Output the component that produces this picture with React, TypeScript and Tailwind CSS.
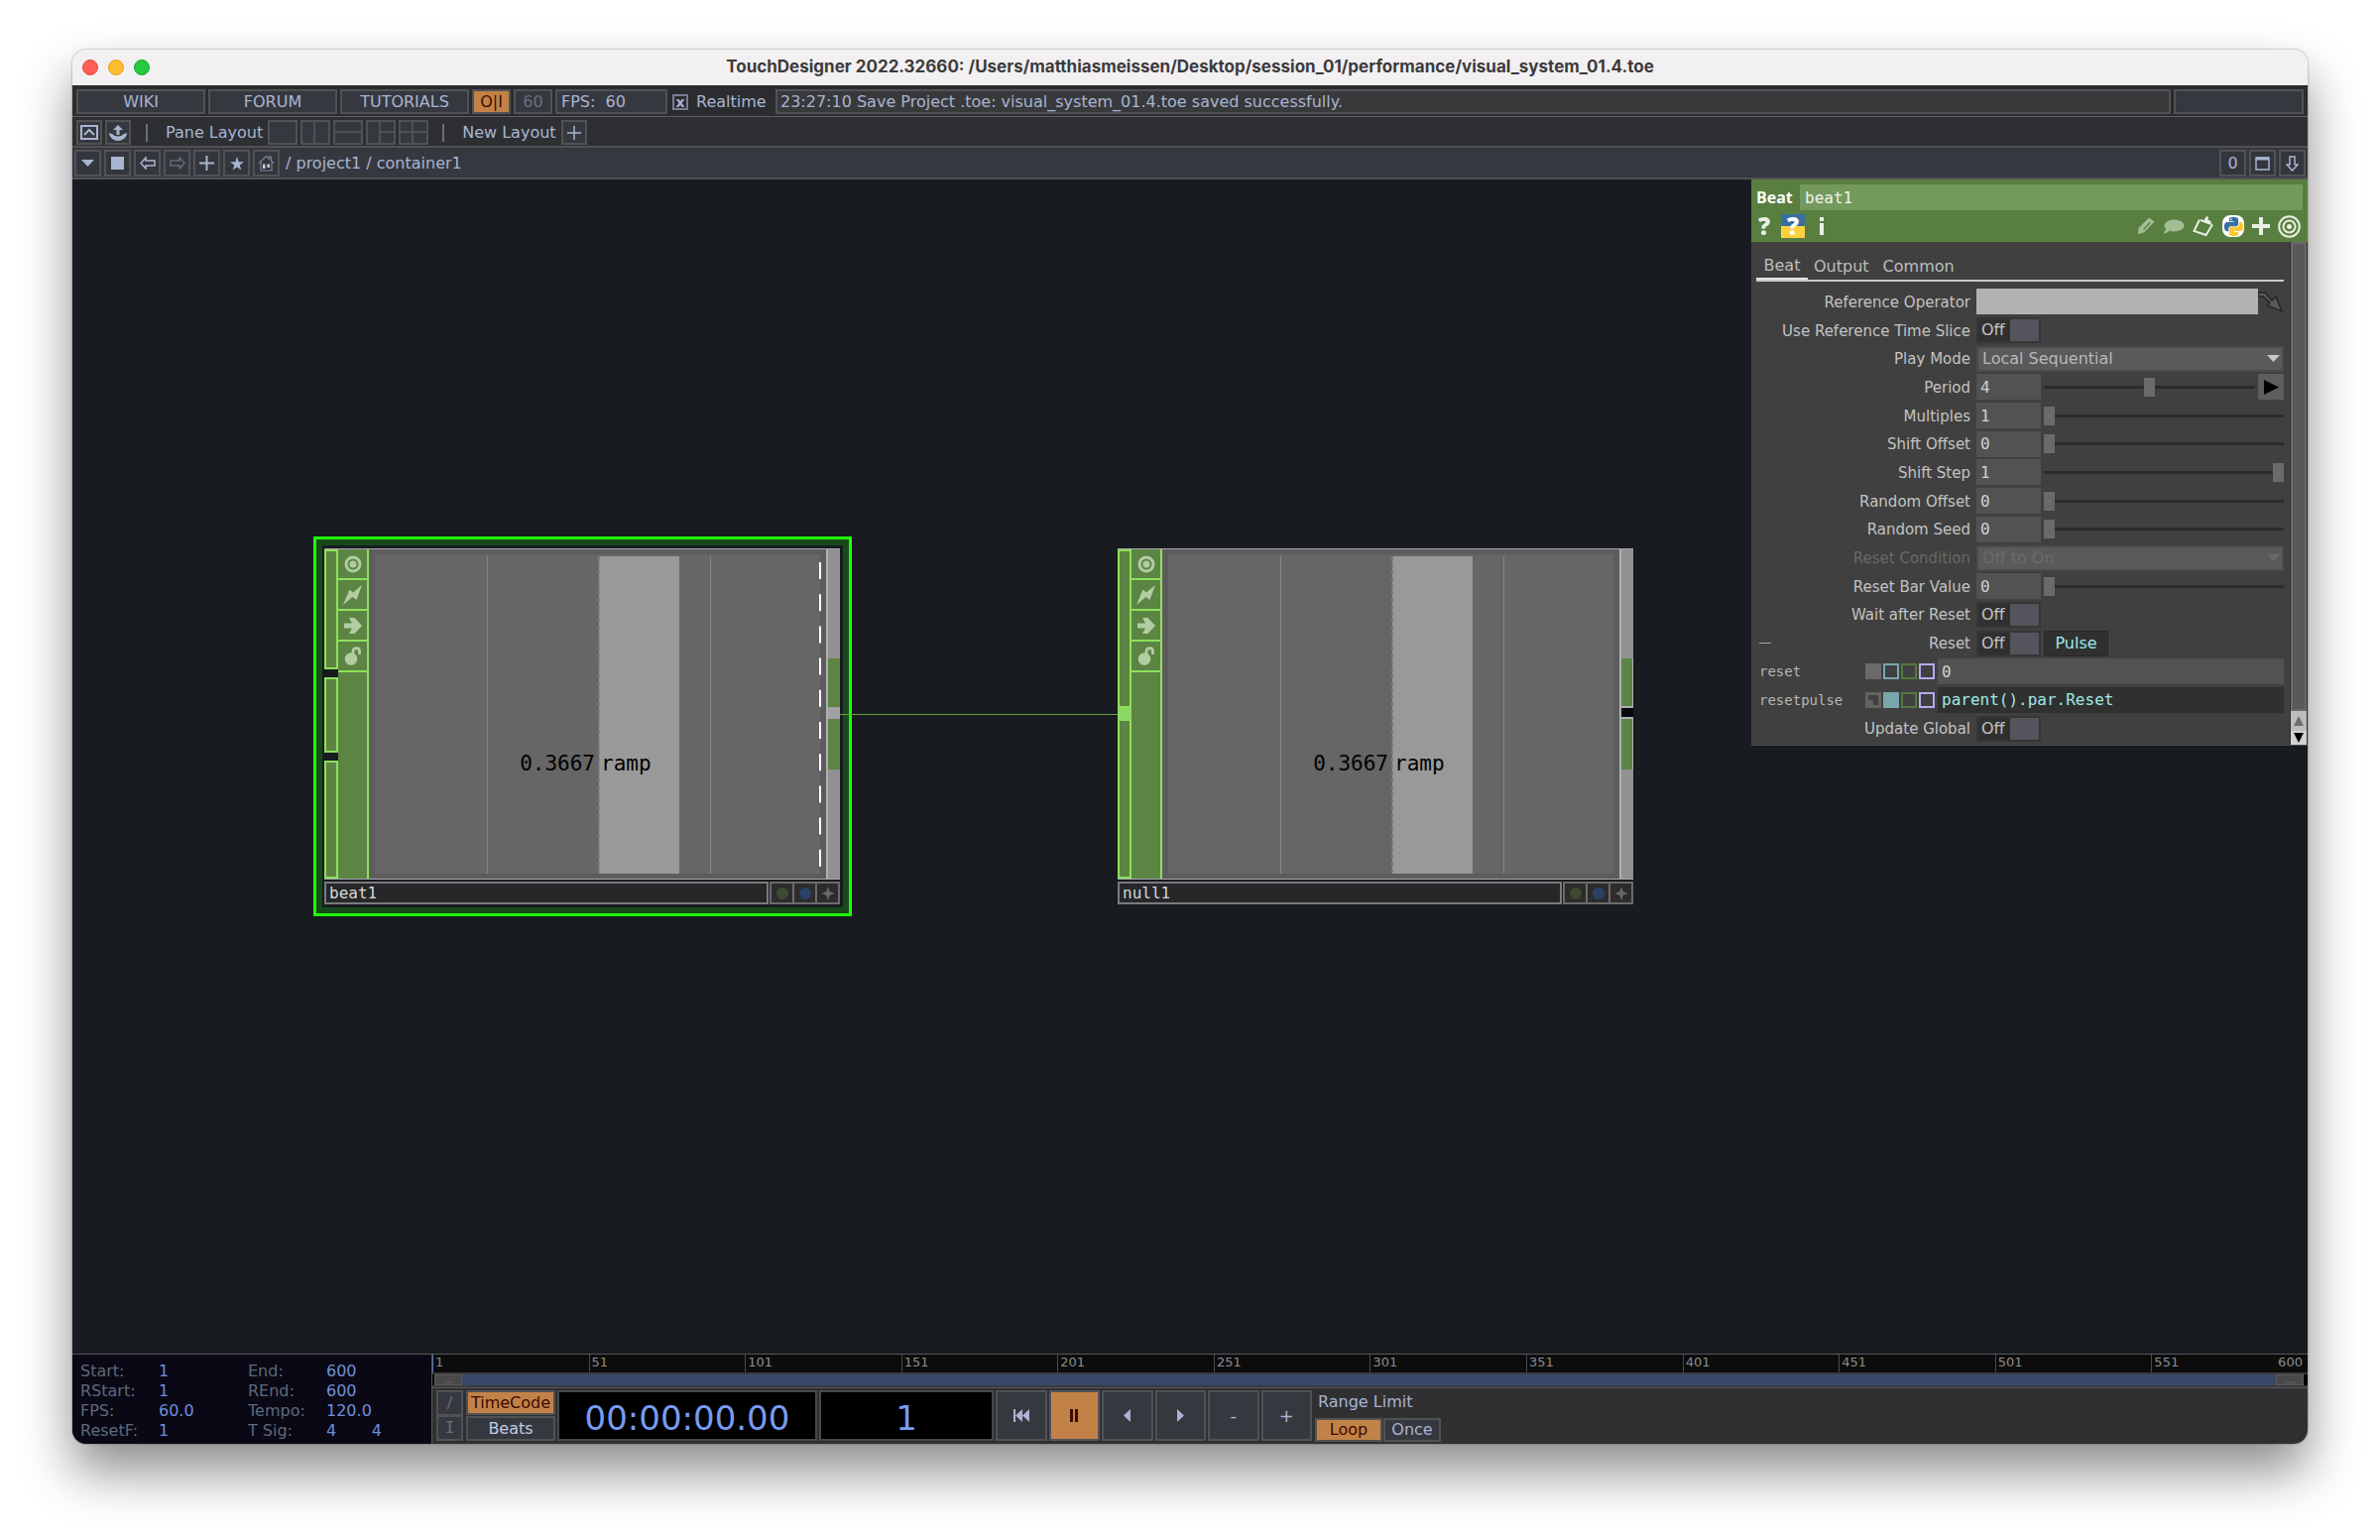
import React from "react";

const SANS = "font-['DejaVu_Sans','Liberation_Sans',sans-serif]";
const MONO = "font-['DejaVu_Sans_Mono','Liberation_Mono',monospace]";

function TitleBar() {
  return (
    <header className="relative flex h-9 items-center justify-center bg-[#f3f0f2] pb-px">
      <div className="absolute left-[10px] flex gap-[10px]">
        <span className="h-4 w-4 rounded-full border border-[#e2463f] bg-[#ff5f57]" />
        <span className="h-4 w-4 rounded-full border border-[#e1a116] bg-[#febc2e]" />
        <span className="h-4 w-4 rounded-full border border-[#12ac28] bg-[#28c840]" />
      </div>
      <h1 className="font-['Inter',sans-serif] text-[17px] leading-none font-bold text-[#3c3b3c]">
        TouchDesigner 2022.32660: /Users/matthiasmeissen/Desktop/session_01/performance/visual_system_01.4.toe
      </h1>
    </header>
  );
}

function MenuBar() {
  const link =
    "flex h-[25px] w-[130px] items-center justify-center border-2 border-[#515254] bg-[#363840]";
  return (
    <nav className="flex h-8 items-start gap-[3px] border-b border-[#5d5e60] bg-[#2b2c2f] px-1 pt-1 text-[16px] leading-5 text-[#a9b4d0]">
      <a href="#wiki" className={link}>
        WIKI
      </a>
      <a href="#forum" className={link}>
        FORUM
      </a>
      <a href="#tutorials" className={link}>
        TUTORIALS
      </a>
      <button className="h-[25px] w-[39px] border-2 border-[#515254] bg-[#c28247] leading-none text-[#3c0a02]">
        O|I
      </button>
      <button className="h-[25px] w-[39px] border-2 border-[#515254] bg-[#363840] leading-none text-[#6a6e7b]">
        60
      </button>
      <div className="flex h-[25px] w-[113px] items-center border-2 border-[#515254] bg-[#363840] pl-1 whitespace-pre">
        FPS:  60
      </div>
      <label className="flex h-[26px] w-[103px] items-center gap-2 pl-[2px]">
        <input type="checkbox" defaultChecked className="peer sr-only" />
        <span className="flex h-4 w-4 items-center justify-center border-2 border-[#787e90] text-[14px] leading-none font-bold">
          x
        </span>
        Realtime
      </label>
      <div className="flex h-[25px] flex-1 items-center border-2 border-[#515254] bg-[#38393b] pl-[3px]">
        23:27:10 Save Project .toe: visual_system_01.4.toe saved successfully.
      </div>
      <div className="h-[25px] w-[131px] border-2 border-[#515254] bg-[#363840]" />
    </nav>
  );
}

function LayoutBar() {
  const tool =
    "flex h-[25px] w-[26px] items-center justify-center border-2 border-[#515254] bg-[#363840]";
  const layout = "flex h-[25px] w-[30px] border-2 border-[#515254] bg-[#363840]";
  return (
    <div className="flex h-[31px] items-center border-b-2 border-[#515254] bg-[#2e2f32] px-1 pt-[2px] text-[16px] leading-5 text-[#a9b4d0]">
      <div className="flex gap-[3px]">
        <button className={tool} aria-label="Open palette">
          <svg width="18" height="15" viewBox="0 0 18 15" fill="none" stroke="currentColor" strokeWidth="2">
            <rect x="1" y="1" width="16" height="13" />
            <path d="M4 10l5-5 5 5" />
          </svg>
        </button>
        <button className={tool} aria-label="Export">
          <svg width="18" height="16" viewBox="0 0 18 16" fill="currentColor">
            <path d="M9 0l5 5h-3.500v5h-3V5H4z" />
            <path d="M0 8l4 1.500c1 2.500 9 2.500 10 0L18 8c0 4-4 8-9 8s-9-4-9-8z" />
          </svg>
        </button>
      </div>
      <span className="mr-[18px] ml-[15px] h-[18px] w-[2px] bg-[#6a6e7b]" />
      <span className="mr-[5px]">Pane Layout</span>
      <div className="flex gap-[3px]">
        <button className={layout} aria-label="Single pane" />
        <button className={layout} aria-label="Left and right">
          <span className="h-full w-1/2 border-r-2 border-[#515254]" />
        </button>
        <button className={`${layout} flex-col`} aria-label="Top and bottom">
          <span className="h-1/2 w-full border-b-2 border-[#515254]" />
        </button>
        <button className={layout} aria-label="Left and split right">
          <span className="h-full w-1/2 border-r-2 border-[#515254]" />
          <span className="h-1/2 w-1/2 border-b-2 border-[#515254]" />
        </button>
        <button className={layout} aria-label="Quad">
          <span className="flex h-full w-1/2 border-r-2 border-[#515254]">
            <span className="h-1/2 w-full border-b-2 border-[#515254]" />
          </span>
          <span className="h-1/2 w-1/2 border-b-2 border-[#515254]" />
        </button>
      </div>
      <span className="mr-[18px] ml-[14px] h-[18px] w-[2px] bg-[#6a6e7b]" />
      <span className="mr-[5px]">New Layout</span>
      <button className={tool} aria-label="Add layout">
        <svg width="14" height="14" viewBox="0 0 14 14" stroke="currentColor" strokeWidth="1.500">
          <path d="M7 0v14M0 7h14" />
        </svg>
      </button>
    </div>
  );
}

function PathBar() {
  const tool =
    "flex h-[27px] w-[27px] items-center justify-center border-2 border-[#515254] bg-[#34363d]";
  return (
    <div className="flex h-8 items-center gap-[3px] border-b-2 border-[#515254] bg-[#363840] px-[2px] pt-px text-[16px] leading-5 text-[#a9b4d0]">
      <button className={tool} aria-label="Pane type">
        <svg width="13" height="7" viewBox="0 0 13 7" fill="currentColor">
          <path d="M0 0h13L6.500 7z" />
        </svg>
      </button>
      <button className={tool} aria-label="Pane">
        <span className="h-[13px] w-[13px] bg-[#a9b4d0]" />
      </button>
      <button className={tool} aria-label="Back">
        <svg width="16" height="13" viewBox="0 0 16 13" fill="none" stroke="currentColor" strokeWidth="1.500">
          <path d="M1 6.500L6 1v3h9v5H6v3z" />
        </svg>
      </button>
      <button className={`${tool} text-[#666a77]`} aria-label="Forward">
        <svg width="16" height="13" viewBox="0 0 16 13" fill="none" stroke="currentColor" strokeWidth="1.500">
          <path d="M15 6.500L10 1v3H1v5h9v3z" />
        </svg>
      </button>
      <button className={tool} aria-label="Add bookmark">
        <svg width="15" height="15" viewBox="0 0 15 15" stroke="currentColor" strokeWidth="2">
          <path d="M7.500 0v15M0 7.500h15" />
        </svg>
      </button>
      <button className={tool} aria-label="Bookmarks">
        <svg width="14" height="14" viewBox="0 0 14 14" fill="currentColor">
          <path d="M7 0l1.700 5.200H14L9.700 8.400l1.600 5.200L7 10.400l-4.300 3.200 1.600-5.200L0 5.200h5.300z" />
        </svg>
      </button>
      <button className={tool} aria-label="Home">
        <svg width="17" height="17" viewBox="0 0 17 17" fill="none" stroke="#7d8396" strokeWidth="1.200">
          <path d="M1 8.500L8.500 1.500l3 2.800V2h2v4.200L16 8.500M3 7.500V16h11V7.500" />
          <path d="M5 9.500h2.500V14H5zM9.500 9.500H12V13H9.500z" fill="#c4cbe0" stroke="none" />
        </svg>
      </button>
      <span className="ml-[3px] flex-1">/ project1 / container1</span>
      <button className={`${tool} leading-none`}>0</button>
      <button className={tool} aria-label="Maximize">
        <svg width="15" height="14" viewBox="0 0 15 14" fill="none" stroke="currentColor" strokeWidth="1.500">
          <rect x="1" y="1" width="13" height="12" />
          <path d="M1 2h13" strokeWidth="3" />
        </svg>
      </button>
      <button className={tool} aria-label="Split down">
        <svg width="13" height="16" viewBox="0 0 13 16" fill="none" stroke="currentColor" strokeWidth="1.500">
          <path d="M4 1h5v8h3l-5.500 6L1 9h3z" />
        </svg>
      </button>
    </div>
  );
}

/* ---------- network editor ---------- */

function Waveform({ selected }: { selected: boolean }) {
  return (
    <svg className="block" width="461" height="332" viewBox="0 0 461 332">
      <rect width="461" height="332" fill="#5c5c5d" />
      <rect x="6" y="5" width="449" height="322" fill="#666666" />
      <path d="M119.500 7v320M344.500 7v320" stroke="#868686" />
      <rect x="232" y="7" width="81" height="320" fill="#999999" />
      <path d="M232 7v320" stroke="#7c7c7c" strokeWidth="2" strokeDasharray="4 3" />
      {selected && <path d="M455 13v307" stroke="#ffffff" strokeWidth="2" strokeDasharray="17 15.200" />}
      <text x="228" y="223" textAnchor="end" fontSize="21" className={MONO}>
        0.3667
      </text>
      <text x="234" y="223" fontSize="21" className={MONO}>
        ramp
      </text>
    </svg>
  );
}

function NodeFlags() {
  const flag =
    "flex h-[31px] w-full items-center justify-center border-b-2 border-[#8ee05c] text-[#b3cda3]";
  return (
    <div className="flex w-[31px] flex-col border-r-2 border-[#8ee05c] bg-[#5c8443]">
      <button className={flag} aria-label="Viewer active">
        <svg width="18" height="18" viewBox="0 0 18 18" fill="none" stroke="currentColor" strokeWidth="3">
          <circle cx="9" cy="9" r="7" />
          <circle cx="9" cy="9" r="3.500" fill="currentColor" stroke="none" />
        </svg>
      </button>
      <button className={flag} aria-label="Bypass">
        <svg width="20" height="20" viewBox="0 0 20 20" fill="currentColor">
          <path d="M19 0L13.500 15l-4-3L0 20 6.500 4.500l3.500 3z" />
        </svg>
      </button>
      <button className={flag} aria-label="Export">
        <svg width="18" height="16" viewBox="0 0 18 16" fill="currentColor">
          <path d="M0 5.500h8L5 0h5.500L18 8l-7.500 8H5l3-5.500H0z" />
        </svg>
      </button>
      <button className={flag} aria-label="Lock">
        <svg width="18" height="19" viewBox="0 0 18 19">
          <circle cx="7" cy="12.500" r="6.300" fill="currentColor" />
          <path d="M9 8V4.500C9 .8 15.500.8 15.500 4.500V8" fill="none" stroke="currentColor" strokeWidth="2.800" />
        </svg>
      </button>
    </div>
  );
}

interface NodeProps {
  name: string;
  inputs: React.ReactNode;
  output: React.ReactNode;
  selected?: boolean;
}

function OpNode({ name, inputs, output, selected = false }: NodeProps) {
  const small = "flex h-full items-center justify-center border-2 border-[#6b6b6b] bg-[#2b2c2b]";
  return (
    <div className="w-[520px]">
      <div className="flex h-[334px] border-y border-[#a7a7ac]">
        <div className="flex w-[14px] flex-col bg-[#181b20]">{inputs}</div>
        <NodeFlags />
        <div className="flex-1">
          <Waveform selected={selected} />
        </div>
        <div className="flex w-[14px] flex-col border-l-2 border-[#b0b0b4] bg-[#919191]">{output}</div>
      </div>
      <div className="mt-[2px] flex h-[23px]">
        <div
          className={`flex flex-1 items-center border-2 border-[#7b7b7b] bg-[#252729] pl-[3px] text-[16px] text-[#d8d8d8] ${MONO}`}
        >
          {name}
        </div>
        <span className="w-px" />
        <button className={`${small} w-[25px]`} aria-label="Display">
          <span className="h-3 w-3 rounded-full bg-[#3d4a31]" />
        </button>
        <button className={`${small} w-[23px] border-l-0`} aria-label="Render">
          <span className="h-3 w-3 rounded-full bg-[#2b4067]" />
        </button>
        <button className={`${small} w-[23px] border-l-0`} aria-label="Activate viewer">
          <svg width="14" height="14" viewBox="0 0 14 14" fill="#686868">
            <path d="M7 0l1.800 5.200L14 7 8.800 8.800 7 14 5.200 8.800 0 7l5.200-1.800z" />
          </svg>
        </button>
      </div>
    </div>
  );
}

function Network() {
  const port = "border-2 border-[#8ee05c] bg-[#5c8443]";
  return (
    <>
      {/* selection frame behind beat1 */}
      <div className="absolute top-[360px] left-[243px] h-[383px] w-[543px] border-[3px] border-[#1eff0a] bg-[#17491c] p-[6px]">
        <div className="h-full w-full bg-[#181b20]" />
      </div>
      <div className="absolute top-[372px] left-[254px]">
        <OpNode
          name="beat1"
          selected
          inputs={
            <>
              <span className={`h-[121px] ${port}`} />
              <span className="h-[8px]" />
              <span className={`h-[76px] ${port}`} />
              <span className="h-[8px]" />
              <span className={`flex-1 ${port}`} />
            </>
          }
          output={
            <>
              <span className="mt-[110px] h-[49px] bg-[#5c8443]" />
              <span className="h-[12px] bg-[#a1a1a6]" />
              <span className="h-[51px] bg-[#5c8443]" />
            </>
          }
        />
      </div>
      <div className="absolute top-[372px] left-[1054px]">
        <OpNode
          name="null1"
          inputs={
            <>
              <span className={`h-[160px] ${port}`} />
              <span className="h-[11px] bg-[#8bd964]" />
              <span className={`flex-1 ${port}`} />
            </>
          }
          output={
            <>
              <span className="mt-[110px] h-[50px] border-r border-b-2 border-[#b0b0b4] bg-[#5c8443]" />
              <span className="h-[9px] bg-[#08090b]" />
              <span className="h-[53px] border-t-2 border-r border-[#b0b0b4] bg-[#5c8443]" />
            </>
          }
        />
      </div>
      <div className="absolute top-[539px] left-[774px] h-px w-[280px] bg-[#67a03c]" />
    </>
  );
}

/* ---------- parameters ---------- */

function Row({ id, label, children, dim = false }: { id: string; label: string; children: React.ReactNode; dim?: boolean }) {
  return (
    <div className="flex flex-1 items-center gap-[6px]">
      <label
        htmlFor={id}
        className={`w-[216px] pt-px text-right text-[15px] ${dim ? "text-[#696969]" : "text-[#c3c3c3]"}`}
      >
        {label}
      </label>
      <div className="flex h-[26px] flex-1 items-center gap-[3px]">{children}</div>
    </div>
  );
}

function Toggle({ id }: { id: string }) {
  return (
    <div className="flex h-[26px] w-[65px] border-2 border-[#363636] bg-[#303030]">
      <span className="flex w-[32px] items-center pl-[3px] text-[#c3c3c3]">Off</span>
      <input id={id} type="checkbox" className="flex-1 appearance-none bg-[#53545c]" />
    </div>
  );
}

function NumberRow({ id, label, value, pos, children }: { id: string; label: string; value: string; pos: number; children?: React.ReactNode }) {
  return (
    <Row id={id} label={label}>
      <input
        id={id}
        defaultValue={value}
        className={`h-[26px] w-[65px] bg-[#525252] pl-1 text-[16px] text-[#d0d0d0] ${MONO}`}
      />
      <input
        type="range"
        aria-label={`${label} slider`}
        defaultValue={pos}
        className="h-5 min-w-0 flex-1 appearance-none bg-transparent [&::-webkit-slider-runnable-track]:h-[3px] [&::-webkit-slider-runnable-track]:bg-[#2b2b2b] [&::-webkit-slider-thumb]:-mt-2 [&::-webkit-slider-thumb]:h-[19px] [&::-webkit-slider-thumb]:w-[11px] [&::-webkit-slider-thumb]:appearance-none [&::-webkit-slider-thumb]:bg-[#6a6a6a]"
      />
      {children}
    </Row>
  );
}

function Menu({ id, value, disabled = false }: { id: string; value: string; disabled?: boolean }) {
  return (
    <div className={`relative h-[26px] flex-1 ${disabled ? "text-[#6b6b6b]" : "text-[#b8b8b8]"}`}>
      <select
        id={id}
        disabled={disabled}
        className="h-full w-full appearance-none border-2 border-[#4b4b4b] bg-[#5a5a5a] pl-1 opacity-100"
      >
        <option>{value}</option>
      </select>
      <svg
        className="pointer-events-none absolute top-[9px] right-[4px]"
        width="13"
        height="7"
        viewBox="0 0 13 7"
        fill={disabled ? "#6b6b6b" : "#c8c8c8"}
      >
        <path d="M0 0h13L6.500 7z" />
      </svg>
    </div>
  );
}

function ExprRow({ name, value, expression = false }: { name: string; value: string; expression?: boolean }) {
  return (
    <div className={`flex flex-1 items-center ${MONO}`}>
      <label htmlFor={name} className="w-[110px] pl-[3px] text-[14px] text-[#b5b5b5]">
        {name}
      </label>
      <div className="flex gap-[2px] pr-[3px]">
        {expression ? (
          <button className="flex h-4 w-4 items-end border-[3px] border-[#636363]" aria-label="Constant mode">
            <span className="h-[5px] w-[5px] bg-[#636363]" />
          </button>
        ) : (
          <button className="h-4 w-4 bg-[#6a6a6a]" aria-label="Constant mode" />
        )}
        <button
          className={`h-4 w-4 border-2 border-[#76a8ab] ${expression ? "bg-[#7ba7aa]" : ""}`}
          aria-label="Expression mode"
        />
        <button className="h-4 w-4 border-2 border-[#53793a]" aria-label="Export mode" />
        <button className="h-4 w-4 border-2 border-[#b9a8ec]" aria-label="Bind mode" />
      </div>
      <input
        id={name}
        defaultValue={value}
        className={`h-[26px] min-w-0 flex-1 pl-[4px] text-[16px] ${
          expression ? "bg-[#303030] text-[#9fe8e6]" : "bg-[#525252] text-[#d0d0d0]"
        }`}
      />
    </div>
  );
}

function PanelHeader() {
  return (
    <div className="bg-[#587f3f] pt-[5px] text-[#e9efe4]">
      <div className="flex items-center pr-[5px] pl-[5px]">
        <label htmlFor="opname" className="w-[44px] font-['Open_Sans',sans-serif] text-[16px] font-bold text-white">
          Beat
        </label>
        <input
          id="opname"
          defaultValue="beat1"
          className={`h-[26px] min-w-0 flex-1 bg-[#74995c] pl-[5px] text-[16px] text-[#eef3ea] ${MONO}`}
        />
      </div>
      <div className="flex h-8 items-center pr-[7px] pl-[5px]">
        <button className="w-[16px] font-['Open_Sans',sans-serif] text-[24px] leading-none font-extrabold">?</button>
        <button
          className="ml-[9px] flex h-6 w-6 items-center justify-center bg-linear-to-b from-[#376f9f] from-50% to-[#ffd140] to-50% font-['Open_Sans',sans-serif] text-[24px] leading-none font-extrabold text-white"
          aria-label="Python help"
        >
          ?
        </button>
        <button className="ml-[12px] w-[10px]" aria-label="Info">
          <svg width="10" height="18" viewBox="0 0 10 18" fill="currentColor">
            <path d="M3 0h4v4H3zM3 6h4v12H3z" />
          </svg>
        </button>
        <div className="ml-auto flex items-center gap-[8px]">
          <button aria-label="Edit">
            <svg width="18" height="18" viewBox="0 0 18 18" fill="#a3bd94">
              <path d="M1 17l.5-6L12 .5l5.500 4L7 15.500zM12.500 5L6 12l1 1 6.500-7z" fillRule="evenodd" />
            </svg>
          </button>
          <button aria-label="Comment">
            <svg width="22" height="15" viewBox="0 0 22 15" fill="#a3bd94">
              <ellipse cx="11.500" cy="6.500" rx="10" ry="6" />
              <path d="M3 8l4 3c-1 2-4 3.500-7 3.500 2-1.500 3-3 3-6.500z" />
            </svg>
          </button>
          <button aria-label="Clipboard">
            <svg width="22" height="21" viewBox="0 0 22 21" fill="none" stroke="currentColor" strokeWidth="2">
              <path d="M7 3.500L1.500 15l12 4L20 8.500" />
              <path d="M8 4l11 4" />
              <path d="M11 5l3-5 2 1-.5 2.500 3 1.500-.5 3z" fill="currentColor" stroke="none" />
            </svg>
          </button>
          <button
            className="flex h-[22px] w-[22px] items-center justify-center rounded-lg bg-white"
            aria-label="Python"
          >
            <svg width="19" height="19" viewBox="0 0 24 24">
              <path
                fill="#376f9f"
                d="M14.250.18l.9.2.73.26.59.3.45.32.34.34.25.34.16.33.1.3.04.26.02.2-.01.13V8.500l-.05.63-.13.55-.21.46-.26.38-.3.31-.33.25-.35.19-.35.14-.33.1-.3.07-.26.04-.21.02H8.770l-.69.05-.59.14-.5.22-.41.27-.33.32-.27.35-.2.36-.15.37-.1.35-.07.32-.04.27-.02.21v3.060H3.170l-.21-.03-.28-.07-.32-.12-.35-.18-.36-.26-.36-.36-.35-.46-.32-.59-.28-.73-.21-.88-.14-1.050-.05-1.230.06-1.220.16-1.040.24-.87.32-.71.36-.57.4-.44.42-.33.42-.24.4-.16.36-.1.32-.05.24-.01h.16l.06.01h8.160v-.83H6.180l-.01-2.750-.02-.37.05-.34.11-.31.17-.28.25-.26.31-.23.38-.2.44-.18.51-.15.58-.12.64-.1.71-.06.77-.04.84-.02 1.270.05zm-6.300 1.980l-.23.33-.08.41.08.41.23.34.33.22.41.09.41-.09.33-.22.23-.34.08-.41-.08-.41-.23-.33-.33-.22-.41-.09-.41.09z"
              />
              <path
                fill="#fdc733"
                d="M21.100 6.110l.28.06.32.12.35.18.36.27.36.35.35.47.32.59.28.73.21.88.14 1.040.05 1.230-.06 1.230-.16 1.040-.24.86-.32.71-.36.57-.4.45-.42.33-.42.24-.4.16-.36.09-.32.05-.24.02-.16-.01h-8.220v.82h5.840l.01 2.760.02.36-.05.34-.11.31-.17.29-.25.25-.31.24-.38.2-.44.17-.51.15-.58.13-.64.09-.71.07-.77.04-.84.01-1.270-.04-1.070-.14-.9-.2-.73-.25-.59-.3-.45-.33-.34-.34-.25-.34-.16-.33-.1-.3-.04-.25-.02-.2.01-.13v-5.340l.05-.64.13-.54.21-.46.26-.38.3-.32.33-.24.35-.2.35-.14.33-.1.3-.06.26-.04.21-.02.13-.01h5.840l.69-.05.59-.14.5-.21.41-.28.33-.32.27-.35.2-.36.15-.36.1-.35.07-.32.04-.28.02-.21V6.070h2.090l.14.01z"
              />
            </svg>
          </button>
          <button aria-label="Add parameter">
            <svg width="18" height="18" viewBox="0 0 18 18" stroke="currentColor" strokeWidth="4">
              <path d="M9 0v18M0 9h18" />
            </svg>
          </button>
          <button aria-label="Focus">
            <svg width="23" height="23" viewBox="0 0 23 23" fill="none" stroke="currentColor" strokeWidth="2">
              <circle cx="11.500" cy="11.500" r="10.300" />
              <circle cx="11.500" cy="11.500" r="6" />
              <circle cx="11.500" cy="11.500" r="2.500" fill="currentColor" stroke="none" />
            </svg>
          </button>
        </div>
      </div>
    </div>
  );
}

function ParameterPanel() {
  const tab = "flex h-full items-center pt-[12px]";
  return (
    <aside className="absolute top-0 right-0 w-[561px] border-b border-[#4a4a4a] bg-[#404040] text-[16px] leading-5">
      <PanelHeader />
      <div className="flex">
        <div className="flex-1 pr-[6px] pl-[5px]">
          <div className="flex h-[40px] gap-[6px] border-b-2 border-[#c9c9c9] text-[#bdbdbd]">
            <button className={`${tab} w-[52px] justify-center border-b-2 border-[#e6e6e6]`}>Beat</button>
            <button className={tab}>Output</button>
            <button className={`${tab} pl-2`}>Common</button>
          </div>
          <div className="mt-[6px] mb-[2px] flex min-h-[459px] flex-col">
            <Row id="refop" label="Reference Operator">
              <input id="refop" className="h-[26px] min-w-0 flex-1 bg-[#b2b2b2]" />
              <button aria-label="Pick operator" className="-ml-[3px]">
                <svg width="26" height="26" viewBox="0 0 26 26" fill="#585858" stroke="#262626" strokeWidth="1.500">
                  <path d="M0 4h7l7 8 4-4 6 15-15-6 3-3-7-6H0z" />
                </svg>
              </button>
            </Row>
            <Row id="timeslice" label="Use Reference Time Slice">
              <Toggle id="timeslice" />
            </Row>
            <Row id="playmode" label="Play Mode">
              <Menu id="playmode" value="Local Sequential" />
            </Row>
            <NumberRow id="period" label="Period" value="4" pos={50}>
              <button
                aria-label="Period menu"
                className="flex h-[26px] w-[26px] items-center justify-center bg-[#5e5e5e]"
              >
                <svg width="15" height="15" viewBox="0 0 15 15">
                  <path d="M0 0l15 7.500L0 15z" />
                </svg>
              </button>
            </NumberRow>
            <NumberRow id="multiples" label="Multiples" value="1" pos={0} />
            <NumberRow id="shiftoffset" label="Shift Offset" value="0" pos={0} />
            <NumberRow id="shiftstep" label="Shift Step" value="1" pos={100} />
            <NumberRow id="randoffset" label="Random Offset" value="0" pos={0} />
            <NumberRow id="randseed" label="Random Seed" value="0" pos={0} />
            <Row id="resetcond" label="Reset Condition" dim>
              <Menu id="resetcond" value="Off to On" disabled />
            </Row>
            <NumberRow id="resetbar" label="Reset Bar Value" value="0" pos={0} />
            <Row id="waitreset" label="Wait after Reset">
              <Toggle id="waitreset" />
            </Row>
            <div className="flex flex-1 items-center">
              <button aria-label="Collapse" className="ml-[3px] h-px w-[12px] bg-[#a5a5a5]" />
              <label htmlFor="resettoggle" className="w-[201px] pt-px text-right text-[15px] text-[#c3c3c3]">
                Reset
              </label>
              <div className="ml-[6px] flex gap-[3px]">
                <Toggle id="resettoggle" />
                <button className="h-[26px] w-[65px] border border-[#282828] bg-[#303030] text-[#9fe8e6]">
                  Pulse
                </button>
              </div>
            </div>
            <ExprRow name="reset" value="0" />
            <ExprRow name="resetpulse" value="parent().par.Reset" expression />
            <Row id="updateglobal" label="Update Global">
              <Toggle id="updateglobal" />
            </Row>
          </div>
        </div>
        {/* scrollbar */}
        <div className="flex w-[18px] flex-col border-x border-[#2c2c2c]">
          <div className="flex-1 border-2 border-[#6a6a6a] bg-[#595959]" />
          <button aria-label="Scroll up" className="flex h-[20px] items-center justify-center bg-[#bdbdbd]">
            <svg width="10" height="10" viewBox="0 0 10 10" fill="#6f6f6f">
              <path d="M5 0l5 10H0z" />
            </svg>
          </button>
          <button aria-label="Scroll down" className="flex h-[14px] items-center justify-center bg-[#d2d2d2]">
            <svg width="10" height="10" viewBox="0 0 10 10">
              <path d="M5 10L0 0h10z" />
            </svg>
          </button>
        </div>
      </div>
    </aside>
  );
}

/* ---------- timeline ---------- */

function TimelineInfo() {
  const left = [
    ["Start:", "1"],
    ["RStart:", "1"],
    ["FPS:", "60.0"],
    ["ResetF:", "1"],
  ];
  const right = [
    ["End:", "600"],
    ["REnd:", "600"],
    ["Tempo:", "120.0"],
    ["T Sig:", "4       4"],
  ];
  return (
    <div className="flex w-[362px] bg-[#0a0814] pt-[7px] pl-[8px] text-[16px] leading-5">
      {[left, right].map((rows, i) => (
        <dl key={i} className="w-[169px]">
          {rows.map(([label, value]) => (
            <div key={label} className="flex">
              <dt className="w-[79px] text-[#5d6a7c]">{label}</dt>
              <dd className="whitespace-pre text-[#6d90dc]">{value}</dd>
            </div>
          ))}
        </dl>
      ))}
    </div>
  );
}

function Timeline() {
  const ticks = [1, 51, 101, 151, 201, 251, 301, 351, 401, 451, 501, 551];
  const button =
    "flex h-[51px] flex-1 items-center justify-center border-2 border-[#515254] bg-[#363840] text-[18px]";
  const readout =
    "flex h-[51px] items-center justify-center border-2 border-[#47484a] bg-black pt-[5px] text-[34px] text-[#779cf0]";
  return (
    <footer className="flex border-t border-[#55565a] bg-[#303032]">
      <TimelineInfo />
      <div className="flex-1 border-l border-[#55565a]">
        <div className="flex h-[18px] bg-[#0c0c0c] text-[13px] leading-4 text-[#8d8d8d]">
          {ticks.map((t, i) => (
            <div
              key={t}
              className={`flex flex-1 justify-between border-l pr-[5px] pl-[2px] ${
                i === 0 ? "border-[#5472b4]" : "border-[#4a4a4a]"
              }`}
            >
              <span>{t}</span>
              {t === 551 && <span>600</span>}
            </div>
          ))}
        </div>
        <div className="flex h-[15px] border-y-2 border-[#3a3a3c] bg-black px-[2px] text-[11px] leading-[9px] text-[#7a7a7a]">
          <span className="w-[28px] border border-[#5a5a5a] bg-[#494949] text-center">...</span>
          <span className="flex-1 bg-[#384869]" />
          <span className="mr-[2px] w-[28px] border border-[#5a5a5a] bg-[#494949] text-center">...</span>
        </div>
        <div className="flex h-[57px] items-start gap-[2px] border-t border-[#55565a] pt-[2px] pl-[4px] text-[16px] text-[#a9b4d0]">
          <div className="mr-px flex w-[27px] flex-col text-[#6a6e7b]">
            <button className="h-[26px] border-2 border-[#515254] bg-[#363840] leading-none">/</button>
            <button className="-mt-px h-[26px] border-2 border-[#515254] bg-[#363840] font-['DejaVu_Sans_Mono',monospace] leading-none">
              I
            </button>
          </div>
          <div className="flex w-[90px] flex-col gap-[1px]">
            <button className="h-[25px] border-2 border-[#515254] bg-[#c28247] leading-none text-[#3c0a02]">
              TimeCode
            </button>
            <button className="h-[25px] border-2 border-[#515254] bg-[#363840] leading-none text-[#c3cbe0]">
              Beats
            </button>
          </div>
          <output className={`${readout} w-[262px]`}>00:00:00.00</output>
          <output className={`${readout} w-[176px]`}>1</output>
          <div className="flex w-[319px] gap-[2px]">
            <button className={button} aria-label="Jump to start">
              <svg width="16" height="13" viewBox="0 0 16 13" fill="currentColor">
                <path d="M0 0h2v13H0zM9 0v13L2 6.500zM16 0v13L9 6.500z" />
              </svg>
            </button>
            <button
              className="flex h-[51px] flex-1 items-center justify-center border-2 border-[#51555e] bg-[#c28247]"
              aria-label="Pause"
            >
              <svg width="8" height="13" viewBox="0 0 8 13" fill="#3c0a02">
                <path d="M0 0h3v13H0zM5 0h3v13H5z" />
              </svg>
            </button>
            <button className={button} aria-label="Play backwards">
              <svg width="7" height="13" viewBox="0 0 7 13" fill="currentColor">
                <path d="M7 0v13L0 6.500z" />
              </svg>
            </button>
            <button className={button} aria-label="Play forwards">
              <svg width="7" height="13" viewBox="0 0 7 13" fill="currentColor">
                <path d="M0 0v13l7-6.500z" />
              </svg>
            </button>
            <button className={button}>-</button>
            <button className={button}>+</button>
          </div>
          <div className="ml-px flex flex-col">
            <span className="h-[28px] pl-[3px] leading-6">Range Limit</span>
            <div className="flex gap-[1px]">
              <button className="h-[24px] w-[68px] border-2 border-[#515254] bg-[#c28247] leading-none text-[#3c0a02]">
                Loop
              </button>
              <button className="h-[24px] w-[58px] border-2 border-[#515254] bg-[#363840] leading-none">Once</button>
            </div>
          </div>
        </div>
      </div>
    </footer>
  );
}

export default function App() {
  return (
    <div className={`flex min-h-screen flex-col bg-white px-[73px] pt-[50px] pb-[97px] ${SANS}`}>
      <div className="flex flex-1 flex-col overflow-hidden rounded-[14px] shadow-[0_0_2px_rgba(0,0,0,0.5),0_28px_52px_rgba(0,0,0,0.45)]">
        <TitleBar />
        <MenuBar />
        <LayoutBar />
        <PathBar />
        <main className="relative min-h-[760px] flex-1 overflow-hidden bg-[#181b20]">
          <Network />
          <ParameterPanel />
        </main>
        <Timeline />
      </div>
    </div>
  );
}
